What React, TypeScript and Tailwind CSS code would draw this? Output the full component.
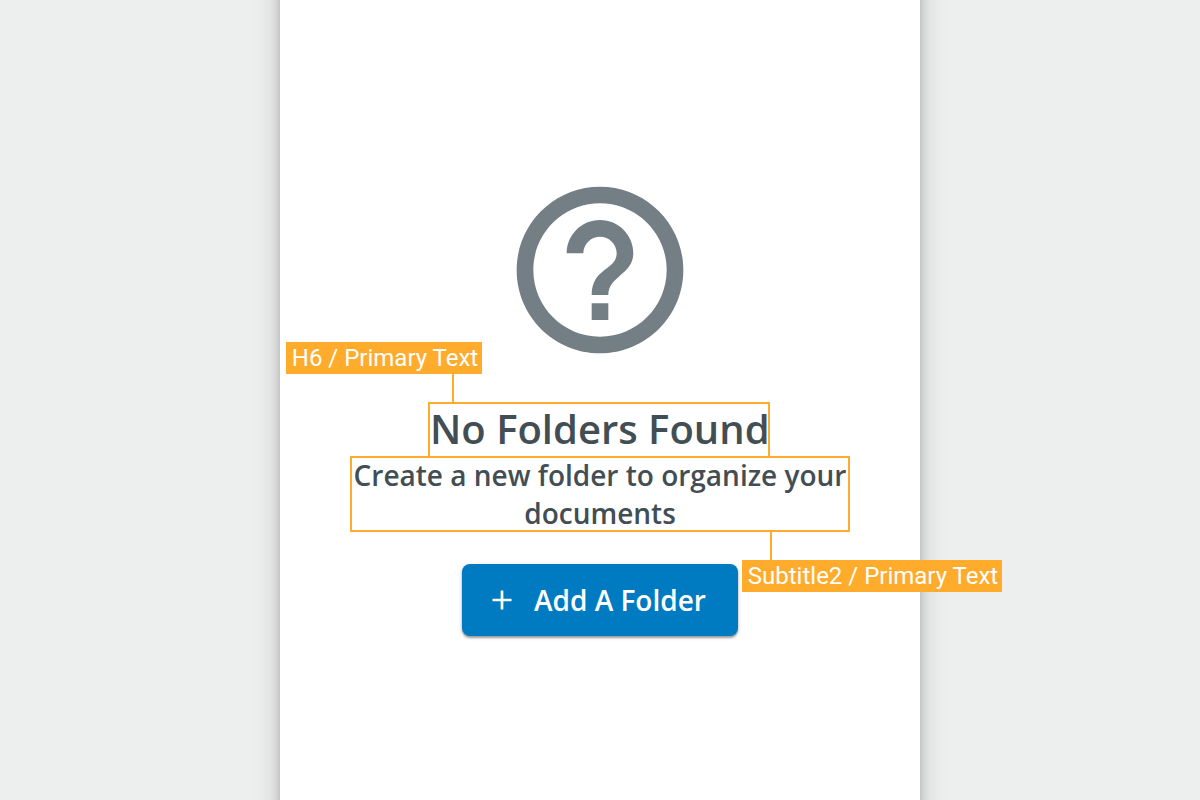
import type { ReactNode } from "react";

function Tag({ className, children }: { className: string; children: ReactNode }) {
  return (
    <span
      className={`absolute flex h-8 items-center justify-center whitespace-nowrap bg-[#ffab2b] pl-[2px] font-['Roboto',sans-serif] text-2xl font-normal leading-8 text-white ${className}`}
    >
      {children}
    </span>
  );
}

export default function App() {
  return (
    <div className="flex h-screen justify-center overflow-hidden bg-[#edefee] font-['Open_Sans',sans-serif]">
      <main className="-my-10 flex w-[640px] flex-col items-center bg-white pt-[210px] shadow-[0_0_10px_rgba(0,0,0,0.2),0_0_28px_rgba(0,0,0,0.16)]">
        <svg className="size-[200px] shrink-0 fill-[#737f85]" viewBox="0 0 24 24">
          <path d="M11 18h2v-2h-2v2zm1-16C6.48 2 2 6.48 2 12s4.48 10 10 10 10-4.48 10-10S17.52 2 12 2zm0 18c-4.41 0-8-3.59-8-8s3.59-8 8-8 8 3.59 8 8-3.59 8-8 8zm0-14c-2.21 0-4 1.79-4 4h2c0-1.1.9-2 2-2s2 .9 2 2c0 2-3 1.75-3 5h2c0-2.25 3-2.5 3-5 0-2.21-1.79-4-4-4z" />
        </svg>

        <div className="relative mt-8 mr-[2px] h-[54px] w-[342px] border-2 border-b-0 border-[#ffab2b]">
          <h1 className="whitespace-nowrap text-center text-[40px] font-semibold leading-[50px] text-[#424e54]">
            No Folders Found
          </h1>
          <span className="absolute -top-[30px] left-[22px] h-7 w-[2px] bg-[#ffab2b]" />
          <Tag className="-top-[62px] -left-[144px] w-[196px]">H6 / Primary Text</Tag>
        </div>

        <div className="relative h-[76px] w-[500px] border-2 border-[#ffab2b]">
          <p className="-mt-[2px] text-center text-[28px] font-semibold leading-[38px] text-[#424e54]">
            Create a new folder to organize your documents
          </p>
          <span className="absolute top-[74px] left-[418px] h-7 w-[2px] bg-[#ffab2b]" />
          <Tag className="top-[102px] left-[390px] w-[260px]">Subtitle2 / Primary Text</Tag>
        </div>

        <button
          type="button"
          className="mt-8 flex h-[72px] w-[276px] shrink-0 items-center rounded-lg bg-[#007bc1] pl-7 text-[28px] font-semibold text-white shadow-[0_2px_2px_rgba(0,0,0,0.32),0_1px_5px_rgba(0,0,0,0.14)]"
        >
          <svg className="size-6 shrink-0" viewBox="0 0 24 24" fill="none" stroke="currentColor" strokeWidth="2.7">
            <path d="M12 2.5v19M2.5 12h19" />
          </svg>
          <span className="ml-5 whitespace-nowrap">Add A Folder</span>
        </button>
      </main>
    </div>
  );
}
